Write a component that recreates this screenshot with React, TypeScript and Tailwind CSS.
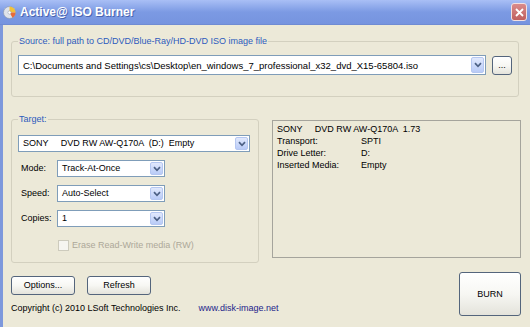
import React from "react";

const font = "font-['Liberation_Sans',Arial,sans-serif]";

function ComboArrow() {
  return (
    <span className="flex h-full w-[13px] shrink-0 items-center justify-center rounded-[2px] border border-[#b5c7f1] bg-gradient-to-b from-[#e1e9fd] to-[#b9cbf7]">
      <svg width="8" height="6" viewBox="0 0 8 6">
        <path d="M1 1.2 L4 4.3 L7 1.2" fill="none" stroke="#4d6185" strokeWidth="1.7" />
      </svg>
    </span>
  );
}

function Combo({ value, className }: { value: string; className: string }) {
  return (
    <div className={`flex items-center border border-[#7f9db9] bg-white p-[1px] ${className}`}>
      <span className="flex-1 truncate whitespace-pre pl-[3px] text-black">{value}</span>
      <ComboArrow />
    </div>
  );
}

function XpButton({ label, className }: { label: string; className: string }) {
  return (
    <button className={`flex items-center justify-center rounded-[3px] border border-[#54657c] bg-gradient-to-b from-[#ffffff] via-[#f7f7f3] to-[#e4e3db] text-black ${className}`}>
      {label}
    </button>
  );
}

function OptionRow({ label, value }: { label: string; value: string }) {
  return (
    <div className="flex items-center pl-[3px]">
      <span className="w-[36px] text-black">{label}</span>
      <Combo value={value} className="h-[17px] w-[108px]" />
    </div>
  );
}

export default function App() {
  return (
    <div className={`flex h-[327px] w-[530px] flex-col overflow-hidden bg-[#ece9d8] text-[9px] leading-[11px] ${font}`}>
      {/* Title bar */}
      <div className="flex h-[25px] shrink-0 items-center border-b border-[#6f8bd3] bg-gradient-to-b from-[#a9bff5] via-[#7c9ae3] to-[#7694df] pl-[3px] pr-[3px]">
        <svg width="13" height="13" viewBox="0 0 13 13" className="shrink-0">
          <circle cx="6.5" cy="6.5" r="6" fill="#dfe3ea" stroke="#8c96a8" strokeWidth="0.6" />
          <path d="M6.5 6.5 L6.5 0.5 A6 6 0 0 1 12.5 6.5 Z" fill="#f2c23a" />
          <path d="M6.5 6.5 L12.5 6.5 A6 6 0 0 1 9.5 11.7 Z" fill="#e86b3a" />
          <circle cx="6.5" cy="6.5" r="1.6" fill="#ffffff" stroke="#8c96a8" strokeWidth="0.5" />
        </svg>
        <span className="ml-[4px] text-[12px] font-bold text-white [text-shadow:1px_1px_0_#4a64b0]">
          Active@ ISO Burner
        </span>
        <button className="ml-auto flex h-[18px] w-[16px] items-center justify-center rounded-[3px] border border-[#f3e0e0] bg-gradient-to-b from-[#d98b8b] to-[#c05f5f]">
          <svg width="9" height="9" viewBox="0 0 9 9">
            <path d="M1 1 L8 8 M8 1 L1 8" stroke="#ffffff" strokeWidth="1.8" />
          </svg>
        </button>
      </div>

      {/* Body */}
      <div className="flex flex-1 flex-col border-l-[3px] border-[#7d98dc] pl-[8px] pr-[9px]">
        <fieldset className="mr-[2px] mt-[11px] rounded-[3px] border border-[#d3d0bf] px-[6px] pb-[21px] pt-[8px]">
          <legend className="px-[1px] text-[#2d5bbd]">
            Source: full path to CD/DVD/Blue-Ray/HD-DVD ISO image file
          </legend>
          <div className="flex items-center gap-[6px]">
            <Combo
              value="C:\Documents and Settings\cs\Desktop\en_windows_7_professional_x32_dvd_X15-65804.iso"
              className="h-[20px] flex-1 text-[9.5px]"
            />
            <XpButton label="..." className="h-[19px] w-[20px] leading-[8px]" />
          </div>
        </fieldset>

        <div className="mt-[17px] flex items-start gap-[13px]">
          <fieldset className="w-[248px] shrink-0 rounded-[3px] border border-[#d3d0bf] px-[6px] pb-[11px] pt-[10px]">
            <legend className="px-[1px] text-[#2d5bbd]">Target:</legend>
            <Combo value="SONY     DVD RW AW-Q170A  (D:)  Empty" className="h-[17px] w-[232px]" />
            <div className="mt-[8px] flex flex-col gap-[8px]">
              <OptionRow label="Mode:" value="Track-At-Once" />
              <OptionRow label="Speed:" value="Auto-Select" />
              <OptionRow label="Copies:" value="1" />
            </div>
            <label className="mt-[12px] flex h-[12px] items-center pl-[40px] text-[#aca899]">
              <span className="h-[11px] w-[11px] border border-[#cdcbbd] bg-[#f6f5f0]" />
              <span className="ml-[3px]">Erase Read-Write media (RW)</span>
            </label>
          </fieldset>

          <div className="mt-[6px] h-[138px] flex-1 border border-[#a5a49c] pl-[4px] pt-[2px] leading-[12px] text-black">
            <div className="whitespace-pre">SONY     DVD RW AW-Q170A  1.73</div>
            <div className="grid grid-cols-[84px_1fr]">
              <span>Transport:</span>
              <span>SPTI</span>
              <span>Drive Letter:</span>
              <span>D:</span>
              <span>Inserted Media:</span>
              <span>Empty</span>
            </div>
          </div>
        </div>

        <div className="mt-[9px] flex items-start">
          <div className="flex flex-col pt-[4px]">
            <div className="flex gap-[12px]">
              <XpButton label="Options..." className="h-[19px] w-[64px]" />
              <XpButton label="Refresh" className="h-[19px] w-[64px]" />
            </div>
            <div className="mt-[8px] whitespace-nowrap text-black">
              Copyright (c) 2010 LSoft Technologies Inc.
              <span className="ml-[18px] text-[#23238a]">www.disk-image.net</span>
            </div>
          </div>
          <XpButton label="BURN" className="ml-auto h-[44px] w-[62px]" />
        </div>
      </div>
    </div>
  );
}
